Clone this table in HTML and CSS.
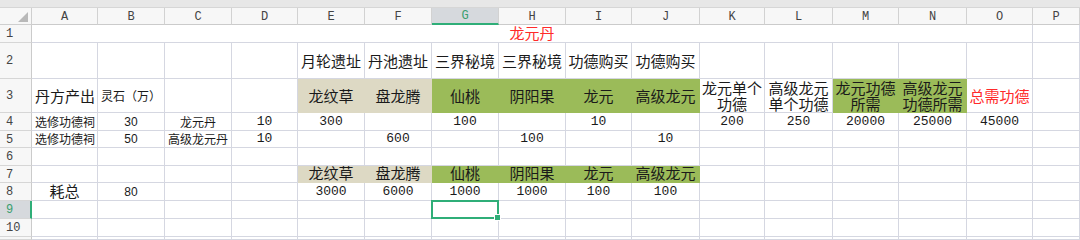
FILE: index.html
```html
<!DOCTYPE html>
<html lang="zh">
<head>
<meta charset="utf-8">
<title>龙元丹</title>
<link rel="stylesheet" href="styles.css">
</head>
<body>
<div class="sheet">
  <div class="topbar"></div>

  <div class="corner"><svg width="10" height="10" viewBox="0 0 10 10"><polygon points="0,10 10,10 10,0" fill="#b9b9b9"/></svg></div>
  <div class="h">A</div><div class="h">B</div><div class="h">C</div><div class="h">D</div>
  <div class="h">E</div><div class="h">F</div><div class="h sel">G</div><div class="h">H</div>
  <div class="h">I</div><div class="h">J</div><div class="h">K</div><div class="h">L</div>
  <div class="h">M</div><div class="h">N</div><div class="h">O</div><div class="h">P</div>

  <!-- row 1 -->
  <div class="r">1</div>
  <div class="c merged big red bot">龙元丹</div>
  <div class="c"></div>

  <!-- row 2 -->
  <div class="r">2</div>
  <div class="c"></div><div class="c"></div><div class="c"></div><div class="c"></div>
  <div class="c big ctr">月轮遗址</div>
  <div class="c big ctr">丹池遗址</div>
  <div class="c big ctr">三界秘境</div>
  <div class="c big ctr">三界秘境</div>
  <div class="c big ctr">功德购买</div>
  <div class="c big ctr">功德购买</div>
  <div class="c"></div><div class="c"></div><div class="c"></div><div class="c"></div><div class="c"></div><div class="c"></div>

  <!-- row 3 -->
  <div class="r">3</div>
  <div class="c big lft">丹方产出</div>
  <div class="c sm lft">灵石（万）</div>
  <div class="c"></div><div class="c"></div>
  <div class="c big ctr tan">龙纹草</div>
  <div class="c big ctr tan">盘龙腾</div>
  <div class="c big ctr grn">仙桃</div>
  <div class="c big ctr grn">阴阳果</div>
  <div class="c big ctr grn">龙元</div>
  <div class="c big ctr grn">高级龙元</div>
  <div class="c big ctr wrap"><span class="ln">龙元单个</span><span class="ln">功德</span></div>
  <div class="c big ctr wrap"><span class="ln">高级龙元</span><span class="ln">单个功德</span></div>
  <div class="c big ctr wrap grn"><span class="ln">龙元功德</span><span class="ln">所需</span></div>
  <div class="c big ctr wrap grn"><span class="ln">高级龙元</span><span class="ln">功德所需</span></div>
  <div class="c big ctr red">总需功德</div>
  <div class="c"></div>

  <!-- row 4 -->
  <div class="r">4</div>
  <div class="c sm lft bot">选修功德祠</div>
  <div class="c ar ctr bot">30</div>
  <div class="c sm ctr bot">龙元丹</div>
  <div class="c num ctr bot">10</div>
  <div class="c num ctr bot">300</div>
  <div class="c"></div>
  <div class="c num ctr bot">100</div>
  <div class="c"></div>
  <div class="c num ctr bot">10</div>
  <div class="c"></div>
  <div class="c num ctr bot">200</div>
  <div class="c num ctr bot">250</div>
  <div class="c num ctr bot">20000</div>
  <div class="c num ctr bot">25000</div>
  <div class="c num ctr bot">45000</div>
  <div class="c"></div>

  <!-- row 5 -->
  <div class="r">5</div>
  <div class="c sm lft bot">选修功德祠</div>
  <div class="c ar ctr bot">50</div>
  <div class="c sm ctr bot">高级龙元丹</div>
  <div class="c num ctr bot">10</div>
  <div class="c"></div>
  <div class="c num ctr bot">600</div>
  <div class="c"></div>
  <div class="c num ctr bot">100</div>
  <div class="c"></div>
  <div class="c num ctr bot">10</div>
  <div class="c"></div><div class="c"></div><div class="c"></div><div class="c"></div><div class="c"></div><div class="c"></div>

  <!-- row 6 -->
  <div class="r">6</div>
  <div class="c"></div><div class="c"></div><div class="c"></div><div class="c"></div>
  <div class="c"></div><div class="c"></div><div class="c"></div><div class="c"></div>
  <div class="c"></div><div class="c"></div><div class="c"></div><div class="c"></div>
  <div class="c"></div><div class="c"></div><div class="c"></div><div class="c"></div>

  <!-- row 7 -->
  <div class="r">7</div>
  <div class="c"></div><div class="c"></div><div class="c"></div><div class="c"></div>
  <div class="c big ctr bot tan">龙纹草</div>
  <div class="c big ctr bot tan">盘龙腾</div>
  <div class="c big ctr bot grn">仙桃</div>
  <div class="c big ctr bot grn">阴阳果</div>
  <div class="c big ctr bot grn">龙元</div>
  <div class="c big ctr bot grn">高级龙元</div>
  <div class="c"></div><div class="c"></div><div class="c"></div><div class="c"></div><div class="c"></div><div class="c"></div>

  <!-- row 8 -->
  <div class="r">8</div>
  <div class="c big ctr bot">耗总</div>
  <div class="c ar ctr bot">80</div>
  <div class="c"></div><div class="c"></div>
  <div class="c num ctr bot">3000</div>
  <div class="c num ctr bot">6000</div>
  <div class="c num ctr bot">1000</div>
  <div class="c num ctr bot">1000</div>
  <div class="c num ctr bot">100</div>
  <div class="c num ctr bot">100</div>
  <div class="c"></div><div class="c"></div><div class="c"></div><div class="c"></div><div class="c"></div><div class="c"></div>

  <!-- row 9 -->
  <div class="r rsel">9</div>
  <div class="c"></div><div class="c"></div><div class="c"></div><div class="c"></div>
  <div class="c"></div><div class="c"></div>
  <div class="c active"></div>
  <div class="c"></div><div class="c"></div><div class="c"></div><div class="c"></div><div class="c"></div>
  <div class="c"></div><div class="c"></div><div class="c"></div><div class="c"></div>

  <!-- row 10 -->
  <div class="r">10</div>
  <div class="c"></div><div class="c"></div><div class="c"></div><div class="c"></div>
  <div class="c"></div><div class="c"></div><div class="c"></div><div class="c"></div>
  <div class="c"></div><div class="c"></div><div class="c"></div><div class="c"></div>
  <div class="c"></div><div class="c"></div><div class="c"></div><div class="c"></div>

  <!-- row 11 (partial) -->
  <div class="r"></div>
  <div class="c"></div><div class="c"></div><div class="c"></div><div class="c"></div>
  <div class="c"></div><div class="c"></div><div class="c"></div><div class="c"></div>
  <div class="c"></div><div class="c"></div><div class="c"></div><div class="c"></div>
  <div class="c"></div><div class="c"></div><div class="c"></div><div class="c"></div>
</div>
</body>
</html>
```

FILE: styles.css
```css
* { box-sizing: border-box; }
html, body { margin: 0; padding: 0; background: #fff; }

.sheet {
  width: 1080px;
  height: 240px;
  overflow: hidden;
  display: grid;
  grid-template-columns: 32px 66px 67px 67px 66px 67px 67px 67px 67px 66px 68px 65px 68px 66px 68px 66px 1fr;
  grid-template-rows: 8px 17px 18px 36px 34px 18px 17px 18px 17px 18px 18px 18px 1fr;
  font-family: "Noto Sans CJK SC", sans-serif;
  color: #1a1a1a;
}

.topbar {
  grid-column: 1 / -1;
  background: #e7e7e7;
  border-bottom: 1px solid #d6d6d6;
}

.corner {
  background: #f7f7f7;
  border-right: 1px solid #cfcfcf;
  border-bottom: 1px solid #cfcfcf;
  display: flex;
  align-items: flex-end;
  justify-content: flex-end;
  padding: 0 3px 2px 0;
}

.h {
  background: #f7f7f7;
  border-right: 1px solid #d2d2d2;
  border-bottom: 1px solid #cbcbcb;
  font-family: "Liberation Mono", monospace;
  font-size: 12px;
  color: #444;
  display: flex;
  align-items: center;
  justify-content: center;
  padding-top: 1px;
}
.h.sel {
  background: #d6d9dd;
  border-bottom: 2px solid #2fae78;
  color: #3a9e6e;
}

.r {
  background: #f7f7f7;
  border-right: 1px solid #cbcbcb;
  border-bottom: 1px solid #d6d6d6;
  font-family: "Liberation Mono", monospace;
  font-size: 12px;
  color: #444;
  display: flex;
  align-items: center;
  padding-left: 6px;
  padding-top: 1px;
}
.r.rsel {
  background: #d6d9dd;
  border-right: 2px solid #2fae78;
  color: #3a9e6e;
}

.c {
  border-right: 1px solid #d5d7e1;
  border-bottom: 1px solid #d5d7e1;
  display: flex;
  align-items: center;
  white-space: nowrap;
  min-width: 0;
  overflow: visible;
}

.merged { grid-column: span 15; justify-content: center; }

.big { font-size: 15px; line-height: 17px; }
.sm { font-size: 12px; line-height: 14px; }
.num { font-family: "Liberation Mono", monospace; font-size: 13px; line-height: 14px; color: #1a1a1a; }
.ar { font-family: "Liberation Sans", sans-serif; font-size: 12px; line-height: 14px; }

.ctr { justify-content: center; text-align: center; }
.lft { justify-content: flex-start; padding-left: 3px; }
.bot { align-items: flex-end; padding-bottom: 1px; }

.wrap { flex-direction: column; align-items: center; justify-content: center; gap: 0; }
.ln { display: block; line-height: 16px; height: 16px; }

.red { color: #ff2a2a; }

.tan { background: #ddd9c4; border-right-color: #ddd9c4; border-bottom-color: #ddd9c4; }
.grn { background: #9bbb59; border-right-color: #9bbb59; border-bottom-color: #9bbb59; }

.active { position: relative; }
.active::before {
  content: "";
  position: absolute;
  left: -1px; top: -1px; right: -1px; bottom: -1px;
  border: 2px solid #2fae78;
}
.active::after {
  content: "";
  position: absolute;
  right: -3px; bottom: -3px;
  width: 5px; height: 5px;
  background: #2fae78;
  border: 1px solid #fff;
}
```
